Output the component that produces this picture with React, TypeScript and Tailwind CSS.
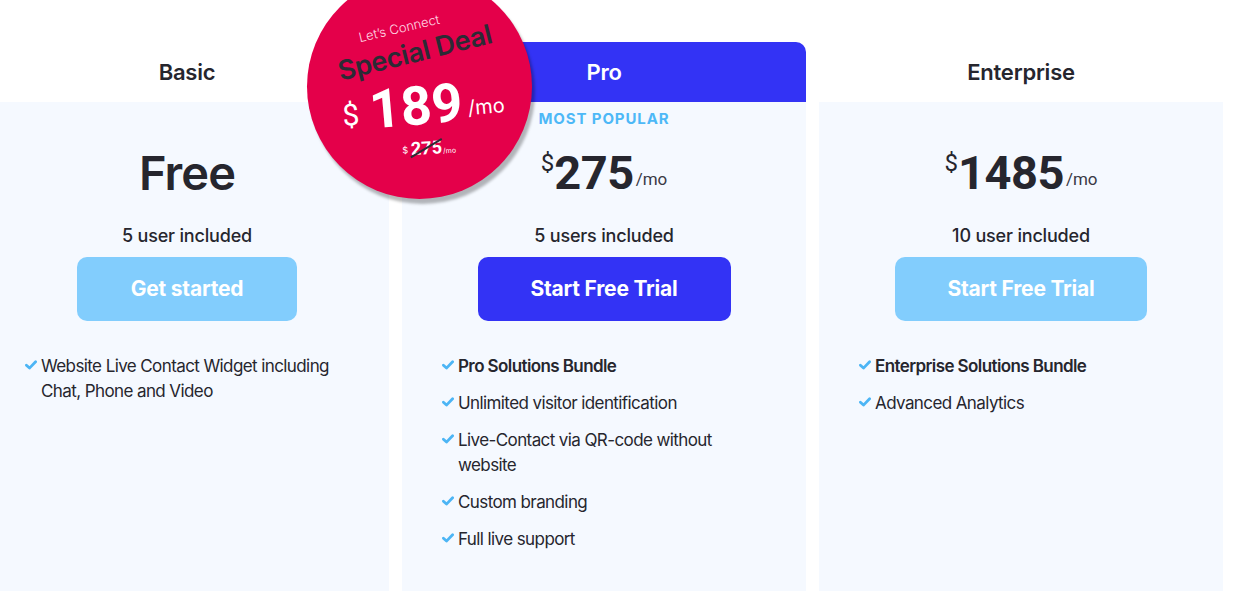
import React from 'react';

type Plan = {
  name: string;
  highlight?: boolean;
  price: React.ReactNode;
  users: string;
  cta: string;
  ctaWidth: string;
  features: { text: string; bold?: boolean }[];
};

const Check = () => (
  <svg viewBox="0 0 12 10" className="mt-[6px] h-[10px] w-[12px] shrink-0" fill="none">
    <path d="M1.4 5.2 4.5 8.1 10.6 1.8" stroke="#4cb5f5" strokeWidth="2.8" strokeLinecap="round" strokeLinejoin="round" />
  </svg>
);

const Price = ({ amount }: { amount: string }) => (
  <div className="flex items-start font-['Roboto',sans-serif] text-[#26262e]">
    <span className="mt-[2px] text-[24px] leading-none">$</span>
    <span className="text-[47px] font-bold leading-none tracking-[-0.01em]">{amount}</span>
    <span className="mt-[22px] ml-[2px] text-[17px] leading-none text-[#3a3a45]">/mo</span>
  </div>
);

const plans: Plan[] = [
  {
    name: 'Basic',
    price: <span className="text-[47px] font-semibold leading-none tracking-[-0.02em] text-[#26262e]">Free</span>,
    users: '5 user included',
    cta: 'Get started',
    ctaWidth: 'w-[220px]',
    features: [{ text: 'Website Live Contact Widget including Chat, Phone and Video' }],
  },
  {
    name: 'Pro',
    highlight: true,
    price: <Price amount="275" />,
    users: '5 users included',
    cta: 'Start Free Trial',
    ctaWidth: 'w-[253px]',
    features: [
      { text: 'Pro Solutions Bundle', bold: true },
      { text: 'Unlimited visitor identification' },
      { text: 'Live-Contact via QR-code without website' },
      { text: 'Custom branding' },
      { text: 'Full live support' },
    ],
  },
  {
    name: 'Enterprise',
    price: <Price amount="1485" />,
    users: '10 user included',
    cta: 'Start Free Trial',
    ctaWidth: 'w-[252px]',
    features: [
      { text: 'Enterprise Solutions Bundle', bold: true },
      { text: 'Advanced Analytics' },
    ],
  },
];

const PlanCard = ({ plan }: { plan: Plan }) => (
  <div className="flex flex-col">
    <div
      className={
        plan.highlight
          ? 'mt-[42px] flex h-[60px] items-center justify-center rounded-t-[10px] bg-[#3333f5] text-white'
          : 'mt-[42px] flex h-[60px] items-center justify-center text-[#26262e]'
      }
    >
      <span className="text-[22px] font-semibold tracking-[-0.01em]">{plan.name}</span>
    </div>
    <div className="flex h-[489px] flex-col items-center bg-[#f5f9ff]">
      <div className="mt-[8px] h-[18px] text-[15px] font-bold leading-[18px] tracking-[0.06em] text-[#4db8f7]">
        {plan.highlight ? 'MOST POPULAR' : ''}
      </div>
      <div className="mt-[12px] flex h-[64px] items-center justify-center">{plan.price}</div>
      <div className="mt-[21px] text-[18px] font-medium leading-[22px] tracking-[-0.01em] text-[#26262e]">
        {plan.users}
      </div>
      <button
        className={`mt-[10px] h-[64px] ${plan.ctaWidth} rounded-[10px] text-[21px] font-bold tracking-[-0.01em] text-white ${
          plan.highlight ? 'bg-[#3333f5]' : 'bg-[#82cdfd]'
        }`}
      >
        {plan.cta}
      </button>
      <ul className="mt-[33px] flex w-full flex-col gap-[12px] pl-[40px] pr-[40px]">
        {plan.features.map((f) => (
          <li key={f.text} className="flex gap-[4px]">
            <Check />
            <span
              className={`text-[17px] leading-[25px] tracking-[-0.035em] text-[#26262e] ${
                f.bold ? 'font-semibold' : 'font-normal'
              }`}
            >
              {f.text}
            </span>
          </li>
        ))}
      </ul>
    </div>
  </div>
);

// the sticker: each line sits at its own spot and tilt, like the printed badge
const DealBadge = () => (
  <div className="absolute left-[307px] top-[-26px] h-[225px] w-[225px] rounded-full bg-[#e4004a] shadow-[3px_5px_3px_rgba(0,0,0,0.28)]">
    <span className="absolute left-[92px] top-[54px] -translate-x-1/2 -translate-y-1/2 -rotate-[13deg] whitespace-nowrap text-[13px] font-light leading-[14px] text-[#ffd6e3]">
      Let’s Connect
    </span>
    <span className="absolute left-[108px] top-[79px] -translate-x-1/2 -translate-y-1/2 -rotate-[14deg] whitespace-nowrap text-[27px] font-semibold leading-[28px] tracking-[-0.01em] text-[#2b2b35]">
      Special Deal
    </span>
    <div className="absolute left-[116px] top-[132px] flex -translate-x-1/2 -translate-y-1/2 -rotate-[5deg] items-end whitespace-nowrap text-white">
      <span className="mb-[9px] mr-[11px] font-['Roboto',sans-serif] text-[30px] leading-none">$</span>
      <span className="font-['Roboto',sans-serif] text-[54px] font-bold leading-[54px]">189</span>
      <span className="mb-[11px] ml-[5px] text-[20px] leading-none">/mo</span>
    </div>
    <div className="absolute left-[122px] top-[174px] flex -translate-x-1/2 -translate-y-1/2 -rotate-[3deg] items-end whitespace-nowrap text-white">
      <span className="mb-[4px] mr-[3px] text-[9px] leading-none">$</span>
      <span className="relative font-['Roboto',sans-serif] text-[18px] font-bold leading-none">
        275
        <span className="absolute left-[-3px] top-[8px] h-[1.5px] w-[36px] -rotate-[28deg] bg-[#2b2b35]" />
      </span>
      <span className="mb-[2px] ml-[1px] text-[7px] leading-none">/mo</span>
    </div>
  </div>
);

export default function App() {
  return (
    <div className="relative h-[591px] w-[1241px] overflow-hidden bg-white font-['Inter',sans-serif]">
      <div className="ml-[-15px] grid w-[1238px] grid-cols-[404px_404px_404px] gap-x-[13px]">
        {plans.map((p) => (
          <PlanCard key={p.name} plan={p} />
        ))}
      </div>
      <DealBadge />
    </div>
  );
}
